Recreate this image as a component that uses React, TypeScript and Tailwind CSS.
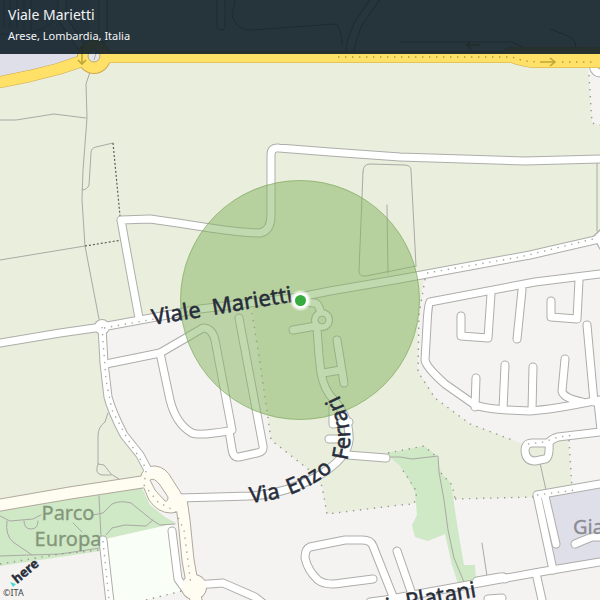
const FARMLAND = [
  "M75 58 L85 50 H600 V239 L425 271 L300 293 L102 326 L0 345 V80 Z",
  "M0 343 L102 326 L104 370 L108 400 L122 435 L147 470 L140 483 L0 502 Z",
  "M252 305 L258 350 L266 404 L271 440 L308 469 L322 486 L327 514 L400 505 L455 499 L535 497 L572 487 L568 436 L530 446 L515 441 L470 424 L435 398 L418 370 L418 320 L425 272 Z",
];

const PARKS = [
  "M386 453 L400 451 L424 446 L432 452 L437 457 L441 473 L450 482 L453 497 L458 530 L464 565 H475 L476 582 L460 590 L452 565 L445 534 L428 541 L415 537 L412 525 L417 515 L415 492 L408 478 L400 466 Z",
  "M0 508 L140 484 L150 505 L165 517 L176 523 L105 539 L100 551 L0 566 Z",
];

const FOOTPATHS = [
  "M90 72 L86 84 L87 118 L83 170 L82 200 L85 246 L99 319",
  "M0 120 H16 L54 114 L86 118",
  "M113 143 L96 147 Q91 148 91 153 L89 185 Q87 190 82 190",
  "M0 260 L85 246",
  "M363 172 Q363 164 370 164 L404 165 Q411 165 411 170 L416 266 M363 172 L359 271 Q359 277 366 276 L416 266",
  "M387 205 L388 273",
  "M597 163 V231",
  "M108 413 L105 422 Q98 427 98 436 V464 L104 465 L111 474 L119 479 M98 464 Q94 474 102 475 L111 475",
  "M99 496 L101 537",
  "M0 516 L10 521 L33 519 L41 515 M24 521 Q24 529 31 529 Q38 529 38 521 M7 521 Q5 535 13 542 L32 555 M0 556 L60 554 L100 548",
  "M93 515 L103 513 L112 504 Q120 500 131 503 L152 520 L160 525 L175 524 M106 535 L112 528 L125 525 L146 526 L153 520",
  "M73 523 L82 532",
  "M387 457 L400 457 L412 459 L438 456 L439 472 L444 500 L448 530 L454 558 L464 582",
  "M482 543 L487 576",
  "M540 463 L546 490",
];

const STREETS = [
  "M0 343 L60 333 L102 327 L140 320 L200 309 L300 297 L330 291 L400 279 L470 266 L530 255 L600 239",
  "M139 318 L131 275 L121 220 L150 219 L178 223 L210 228 Q245 233 260 233 Q271 231 271 215 V155 Q271 147 279 148 L330 152 L400 157 L525 161 L600 159",
  "M102 327 L104 363 L108 397 Q112 412 124 435 L140 455 L148 470",
  "M106 364 L160 353 L203 328 Q212 328 215 340 L232 430",
  "M160 353 L170 400 Q176 424 192 433 Q199 436 229 431",
  "M239 318 L263 446 Q264 452 257 453 L239 457 Q233 458 232 449 L229 431",
  "M302 302 L315 303 Q320 304 322 320 L317 328 L319 356 L321 373 Q324 390 334 400 Q350 418 349 440 Q348 458 318 476 Q286 494 250 496 L180 498",
  "M293 330 L316 326 M337 340 L344 383 M323 373 L341 370",
  "M333 408 V424 L349 422 M329 439 H349 M348 455 L386 458",
  "M180 498 L184 508",
  "M600 274 L535 282 L430 302 Q428 304 427 325 L425 360 Q426 367 445 384 L475 405 Q488 410 530 411 Q550 410 600 400",
  "M491 294 L488 338 L461 336 V316",
  "M522 290 L517 339",
  "M579 280 L577 319 L551 317 V301",
  "M475 407 L476 378 M503 409 L505 365 M532 410 L533 367",
  "M565 359 L562 391 Q563 398 582 402 M587 325 L594 402",
  "M598 402 L601 430",
  "M600 432 L558 437 Q553 438 548 443 L532 443 Q525 443 525 451 Q526 461 535 461 L545 459 Q550 458 549 443",
  "M600 484 L537 495 L553 570",
  "M545 496 L556 544",
  "M370 602 L385 600 L540 572 L600 562",
  "M536 573 L542 600",
  "M396 604 L373 546 Q371 540 362 540 L345 540 L310 547 Q305 549 305 558 Q308 571 318 580 Q326 586 342 583 L373 579",
  "M397 551 L414 600",
  "M195 585 L223 583 L255 597 L264 604",
  "M103 540 L110 602",
  "M172 531 L178 579 L186 590",
  "M477 581 L500 577 Q504 576 505 579",
  "M575 544 L582 541 L592 537 H600",
  "M488 599 L502 598",
  "M593 66 Q595 73 600 73",
];

const CONNECTORS = [
  "M0 505 L70 493 L142 482 L152 480",
  "M181 500 L184 520 L188 560 L193 588 L197 604",
];

const MAJOR = [
  "M0 82 L30 76 L58 69 L85 60",
  "M94 57 H330 L512 57 Q522 61 535 62 H604",
  "M510 53 H604",
];

const BOUNDARIES = [
  "M252 313 L258 350 L266 404 L271 440 L308 469 L322 486 L327 514 L400 505 L414 504 L417 492 L408 478 L400 466",
  "M425 279 L419 315 L418 372 L435 398 L470 424 L515 441",
  "M569 440 L572 488 M455 499 L535 497",
  "M388 453 L424 446 L437 457 M441 473 L452 485 L455 498",
  "M589 75 L592 123 L600 125",
  "M0 564 L60 554 L100 550",
  "M146 600 L182 591",
];

const ROAD_DOTS = [
  "M104 328 L160 318 L200 309",
  "M427 273 L520 257 L597 238",
  "M102 327 L106 380 L112 410 L127 438 L147 470",
  "M103 541 L109 600",
  "M528 444 L544 442 L558 437 L575 435",
  "M537 495 L575 490",
  "M146 471 L144 485 L158 502 L175 511 L184 530 L191 585",
];

const HIDDEN_STREETS = [
  "M221 -5 V26",
  "M378 -5 L358 24 L352 40 L350 50",
  "M62 -5 V18 L80 45",
  "M103 -5 V38",
];

const PARKING_ROWS = "M4 0 V26 M10 0 V27 M17 0 V28 M24 0 V30 M31 0 V31 M0 34 Q40 36 54 20";

function Lines({ paths, color, width }: { paths: string[]; color: string; width: number }) {
  return (
    <g fill="none" stroke={color} strokeWidth={width} strokeLinecap="round" strokeLinejoin="round">
      {paths.map((d) => (
        <path key={d} d={d} />
      ))}
    </g>
  );
}

function Dots({ paths, color }: { paths: string[]; color: string }) {
  return (
    <g fill="none" stroke={color} strokeWidth="1.4" strokeDasharray="1.4 5.6">
      {paths.map((d) => (
        <path key={d} d={d} />
      ))}
    </g>
  );
}

function StreetMap() {
  return (
    <svg
      viewBox="0 0 600 600"
      preserveAspectRatio="xMidYMid slice"
      className="block h-full w-full"
      role="img"
      aria-label="Viale Marietti"
    >
      <defs>
        <path id="marietti" d="M153 325 L296 301" />
        <path id="ferrari" d="M250 503 Q272 501 290 495 Q314 486 340 465" />
        <path id="ferrari-north" d="M347 461 Q352 440 349 425 Q346 408 336 390" />
        <radialGradient id="halo">
          <stop offset="0.65" stopColor="#fff" />
          <stop offset="1" stopColor="#fff" stopOpacity="0" />
        </radialGradient>
      </defs>

      <rect width="600" height="600" fill="#f4f3f2" />
      <g fill="#e9eedd">
        {FARMLAND.map((d) => (
          <path key={d} d={d} />
        ))}
      </g>
      <path d="M588 68 H600 V125 L592 123 Z" fill="#f4f3f2" />
      <path d="M0 0 H90 V58 L0 78 Z M549 495 L600 485 V562 L555 571 Z" fill="#dfdfea" />
      <path d="M105 539 L172 524 L181 591 L146 600 H108 Z" fill="#f9fff7" />
      <g fill="#cfe8c5">
        {PARKS.map((d) => (
          <path key={d} d={d} />
        ))}
      </g>

      <Lines paths={FOOTPATHS} color="#a9aaa4" width={1} />
      <path
        d="M113 143 L120 216 M85 246 L122 240"
        fill="none"
        stroke="#5c5f58"
        strokeWidth="1.2"
        strokeDasharray="2 2"
      />
      <Dots paths={BOUNDARIES} color="#969990" />

      <Lines paths={STREETS} color="#adadaa" width={9} />
      <Lines paths={HIDDEN_STREETS} color="#8a8a88" width={9} />
      <path d={PARKING_ROWS} fill="none" stroke="#8a8a94" />
      <path
        d="M236 -5 L232 15 Q235 30 252 30 L335 24 Q341 25 342 45 M400 42 H512 L523 47 M550 29 L566 35 Q576 38 576 48"
        fill="none"
        stroke="#8a8a88"
      />
      <circle cx="102" cy="327" r="8" fill="#adadaa" />
      <circle cx="322" cy="320" r="11" fill="#adadaa" />
      <path d="M592 237 L600 229 V250 Z" fill="#adadaa" />
      <Lines paths={CONNECTORS} color="#b0aa9b" width={13} />
      <circle cx="194" cy="587" r="13" fill="#b0aa9b" />
      <path
        d="M140 479 Q143 465 155 466 Q166 467 172 479 L181 493 Q184 514 171 513 Q158 513 149 500 Z"
        fill="#fffcf1"
        stroke="#b0aa9b"
      />
      <Lines paths={STREETS} color="#fff" width={7} />
      <Lines paths={HIDDEN_STREETS} color="#fff" width={7} />
      <circle cx="102" cy="327" r="7" fill="#fff" />
      <circle cx="322" cy="320" r="10" fill="#fff" />
      <circle cx="322" cy="320" r="4" fill="#e9eedd" stroke="#adadaa" />
      <path d="M594 237 L600 231 V248 Z" fill="#fff" />
      <Lines paths={CONNECTORS} color="#fffcf1" width={11} />
      <circle cx="194" cy="587" r="12" fill="#fffcf1" />
      <path d="M150 480 Q154 477 160 485 L168 497 Q168 502 165 501 L155 490 Z" fill="#f4f3f2" stroke="#b0aa9b" />

      <Lines paths={MAJOR} color="#d0a84e" width={12} />
      <circle cx="94" cy="57" r="17" fill="#d0a84e" />
      <Lines paths={MAJOR} color="#ffe168" width={11} />
      <circle cx="94" cy="57" r="16" fill="#ffe168" />
      <circle cx="94" cy="56" r="6" fill="#e4e3ea" stroke="#b9ab70" />
      <path d="M97 50 L94 60" stroke="#a9aaa4" />
      <path
        d="M82 46 V64 M78 60 L82 64 L86 60 M540 62 H555 M550 58 L555 62 L550 66 M467 45 H480 M471 41 L467 45 L471 49"
        fill="none"
        stroke="#bfa638"
        strokeWidth="1.6"
      />
      <Dots paths={["M338 57 H512 L524 61 L538 62 M562 62 H594"]} color="#b09a3c" />
      <Dots paths={ROAD_DOTS} color="#a8a8a4" />

      <circle cx="300" cy="300" r="119.5" fill="#84b35e" fillOpacity="0.5" stroke="#6f9f4e" strokeOpacity="0.6" />

      <g
        className="font-['Noto_Sans',sans-serif] text-[22px]"
        fill="#272d3a"
        stroke="#272d3a"
        strokeWidth="0.5"
      >
        <text>
          <textPath href="#marietti">Viale</textPath>
        </text>
        <text>
          <textPath href="#marietti" startOffset="61">Marietti</textPath>
        </text>
        <text>
          <textPath href="#ferrari">Via</textPath>
        </text>
        <text>
          <textPath href="#ferrari" startOffset="41">Enzo</textPath>
        </text>
        <text>
          <textPath href="#ferrari-north">Ferrari</textPath>
        </text>
        <text transform="translate(387 614) rotate(-10)">i</text>
        <text transform="translate(407 609) rotate(-10)">Platani</text>
      </g>
      <g
        className="font-['Noto_Sans',sans-serif] text-xl"
        fill="#84967a"
        stroke="#84967a"
        strokeWidth="0.3"
        textAnchor="middle"
      >
        <text x="68" y="520">Parco</text>
        <text x="68" y="546">Europa</text>
      </g>
      <text
        x="573"
        y="534"
        className="font-['Noto_Sans',sans-serif] text-xl"
        fill="#8b8b94"
        stroke="#8b8b94"
        strokeWidth="0.3"
      >
        Gia
      </text>

      <circle cx="300.5" cy="300.5" r="11" fill="url(#halo)" />
      <circle cx="300.5" cy="300.5" r="5.5" fill="#36ab3f" />

      <path d="M10 582 L16 584 L13 587 Z" fill="#48dad0" />
      <text
        transform="translate(17 584) rotate(-40)"
        className="font-['Noto_Sans',sans-serif] text-[13px] font-bold"
        fill="#272d3a"
        stroke="#272d3a"
        strokeWidth="0.4"
      >
        here
      </text>
      <text x="3" y="596" className="font-['Noto_Sans',sans-serif] text-[9px]" fill="#444">
        ©ITA
      </text>
    </svg>
  );
}

export default function App() {
  return (
    <main className="relative h-screen w-full overflow-hidden bg-[#f4f3f2]">
      <StreetMap />
      <header className="absolute inset-x-0 top-0 bg-[#0f1f28]/90 px-2 pt-1 pb-2 font-['Noto_Sans',sans-serif] text-gray-100">
        <h1 className="text-sm leading-[22px]">Viale Marietti</h1>
        <p className="text-[11px] leading-5">Arese, Lombardia, Italia</p>
      </header>
    </main>
  );
}
